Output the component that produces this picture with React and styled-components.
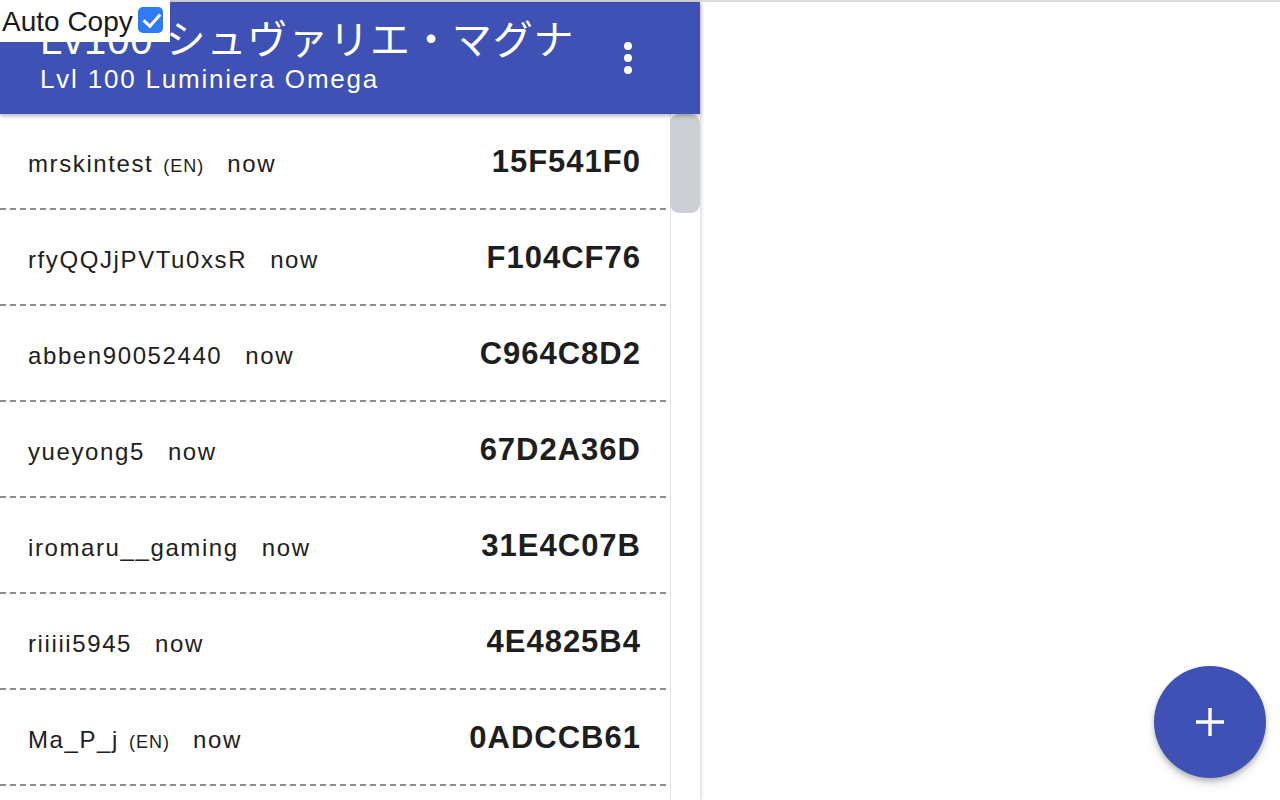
import React from "react";
import styled, { createGlobalStyle } from "styled-components";

const GlobalStyle = createGlobalStyle`
  html, body { margin: 0; padding: 0; height: 100%; background: #fff; }
  body { font-family: "Liberation Sans", Arial, "Noto Sans CJK JP", sans-serif; color: #212121; overflow: hidden; }
  #root { height: 100%; }
  * { box-sizing: border-box; }
`;

const Page = styled.div`
  height: 100vh;
  border-top: 2px solid #dcdcdf;
  display: flex;
`;

const Panel = styled.div`
  width: 700px;
  height: 100%;
  display: flex;
  flex-direction: column;
  box-shadow: 1px 0 4px rgba(0, 0, 0, 0.18);
  background: #fff;
`;

const Header = styled.header`
  position: relative;
  z-index: 1;
  flex: 0 0 112px;
  background: #3f51b5;
  color: #fff;
  display: flex;
  align-items: stretch;
  box-shadow: 0 2px 4px rgba(0, 0, 0, 0.28);
`;

const TitleBlock = styled.div`
  flex: 1;
  padding: 18px 0 0 40px;
  display: flex;
  flex-direction: column;
`;

const Title = styled.h1`
  margin: 0;
  font-weight: 400;
  font-size: 40px;
  line-height: 40px;
  letter-spacing: 0.9px;
  white-space: nowrap;
  font-family: "Liberation Sans", Arial, "Noto Sans CJK JP", sans-serif;
`;

const Subtitle = styled.div`
  margin-top: 4px;
  font-size: 26px;
  line-height: 30px;
  letter-spacing: 1.8px;
  white-space: nowrap;
`;

const MenuButton = styled.button`
  align-self: center;
  width: 40px;
  height: 40px;
  margin-right: 52px;
  border: 0;
  padding: 0;
  background: transparent;
  display: flex;
  align-items: center;
  justify-content: center;
  cursor: pointer;
`;

const ListArea = styled.div`
  flex: 1;
  min-height: 0;
  display: flex;
`;

const Rows = styled.div`
  flex: 1;
  min-width: 0;
  overflow: hidden;
`;

const ScrollTrack = styled.div`
  flex: 0 0 30px;
  border-left: 1px solid #e3e3e3;
  background: #fff;
  display: flex;
  flex-direction: column;
`;

const ScrollThumb = styled.div`
  height: 99px;
  margin-left: -1px;
  background: #ccd0d4;
  border-radius: 9px;
`;

const Row = styled.div`
  height: 96px;
  padding: 32px 29px 0 28px;
  display: flex;
  align-items: baseline;
  background-image: linear-gradient(to right, #8e8e8e 60%, transparent 60%);
  background-size: 10px 2px;
  background-repeat: repeat-x;
  background-position: left bottom;
`;

const Name = styled.span`
  font-size: 24px;
  letter-spacing: 1.6px;
  white-space: nowrap;
`;

const Lang = styled.span`
  font-size: 18px;
  letter-spacing: 1px;
  margin-left: 10px;
`;

const Time = styled.span`
  font-size: 24px;
  letter-spacing: 1.6px;
  margin-left: 23px;
`;

const Code = styled.span`
  margin-left: auto;
  font-size: 31px;
  line-height: 31px;
  font-weight: 700;
  letter-spacing: 1px;
  color: #1e1e1e;
`;

const CopyLabel = styled.label`
  position: fixed;
  top: 0;
  left: 0;
  z-index: 5;
  width: 170px;
  height: 42px;
  background: #fff;
  display: flex;
  align-items: flex-start;
  padding-left: 2px;
  font-size: 28px;
  color: #1a1a1a;
`;

const CopyText = styled.span`
  line-height: 28px;
  margin-top: 8px;
`;

const CopyBox = styled.input`
  appearance: none;
  -webkit-appearance: none;
  position: relative;
  width: 25px;
  height: 26px;
  margin: 7px 0 0 5px;
  border-radius: 5px;
  background: #2f7bf6;
  &::after {
    content: "";
    position: absolute;
    left: 9px;
    top: 3px;
    width: 7px;
    height: 14px;
    border-right: 3.5px solid #fff;
    border-bottom: 3.5px solid #fff;
    transform: rotate(42deg);
  }
`;

const Fab = styled.button`
  position: fixed;
  right: 14px;
  bottom: 22px;
  width: 112px;
  height: 112px;
  border-radius: 50%;
  border: 0;
  background: #3f51b5;
  box-shadow: 0 3px 5px rgba(0, 0, 0, 0.2), 0 6px 10px rgba(0, 0, 0, 0.12);
  display: flex;
  align-items: center;
  justify-content: center;
  cursor: pointer;
`;

const rows = [
  { name: "mrskintest", en: true, code: "15F541F0" },
  { name: "rfyQQJjPVTu0xsR", code: "F104CF76" },
  { name: "abben90052440", code: "C964C8D2" },
  { name: "yueyong5", code: "67D2A36D" },
  { name: "iromaru__gaming", code: "31E4C07B" },
  { name: "riiiii5945", code: "4E4825B4" },
  { name: "Ma_P_j", en: true, code: "0ADCCB61" },
];

const DotsIcon = () => (
  <svg width="10" height="34" viewBox="0 0 10 34" aria-hidden="true">
    <circle cx="5" cy="5" r="4" fill="#fff" />
    <circle cx="5" cy="17" r="4" fill="#fff" />
    <circle cx="5" cy="29" r="4" fill="#fff" />
  </svg>
);

const PlusIcon = () => (
  <svg width="30" height="30" viewBox="0 0 30 30" aria-hidden="true">
    <path d="M15 1v28M1 15h28" stroke="#fff" strokeWidth="3.4" />
  </svg>
);

export default function App() {
  return (
    <>
      <GlobalStyle />
      <CopyLabel>
        <CopyText>Auto Copy</CopyText>
        <CopyBox type="checkbox" defaultChecked />
      </CopyLabel>
      <Page>
        <Panel>
          <Header>
            <TitleBlock>
              <Title>Lv100 シュヴァリエ・マグナ</Title>
              <Subtitle>Lvl 100 Luminiera Omega</Subtitle>
            </TitleBlock>
            <MenuButton aria-label="menu">
              <DotsIcon />
            </MenuButton>
          </Header>
          <ListArea>
            <Rows>
              {rows.map((r, i) => (
                <Row key={i}>
                  <Name>{r.name}</Name>
                  {r.en && <Lang>(EN)</Lang>}
                  <Time>now</Time>
                  <Code>{r.code}</Code>
                </Row>
              ))}
            </Rows>
            <ScrollTrack>
              <ScrollThumb />
            </ScrollTrack>
          </ListArea>
        </Panel>
      </Page>
      <Fab aria-label="add">
        <PlusIcon />
      </Fab>
    </>
  );
}
